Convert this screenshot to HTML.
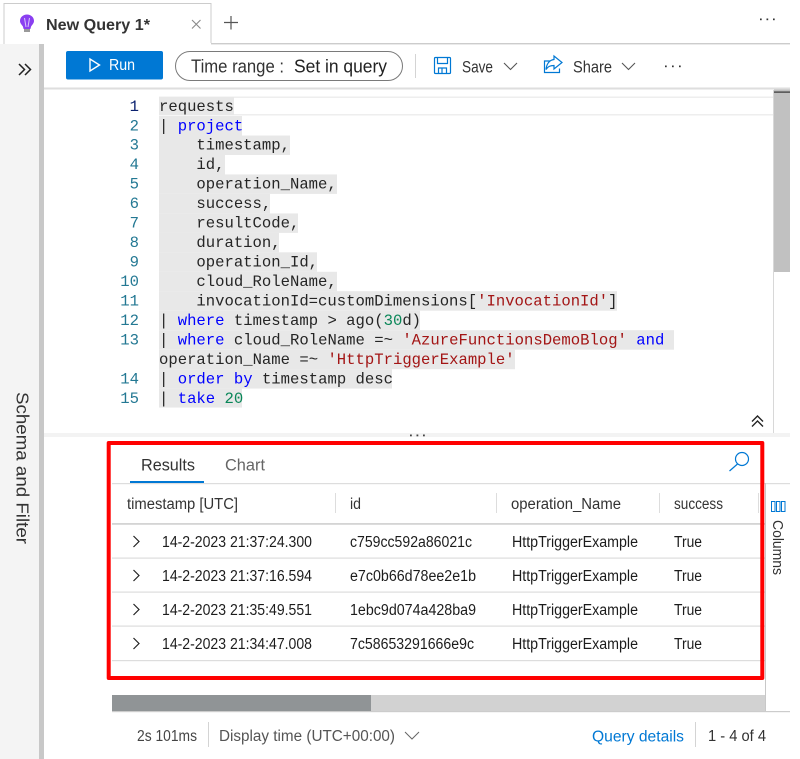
<!DOCTYPE html>
<html><head><meta charset="utf-8"><title>New Query 1</title>
<style>
html,body{margin:0;padding:0;background:#fff;width:800px;height:759px;overflow:hidden}
svg{display:block}
text{font-family:"Liberation Sans",sans-serif;white-space:pre}
.c text,text.c{font-family:"Liberation Mono",monospace;font-size:15.6px;fill:#252525}
.n text{font-family:"Liberation Mono",monospace;font-size:15.6px;fill:#237893;text-anchor:end}
.k{fill:#0000ff}.s{fill:#a31515}.g{fill:#098658}
.u text{font-size:15.5px;fill:#333}
.r text{font-size:15.5px;fill:#1c1c1c}
</style></head><body>
<svg width="800" height="759" viewBox="0 0 800 759" xmlns="http://www.w3.org/2000/svg">
<!-- tab strip -->
<path d="M4 44V3.500H211V43" fill="#fff" stroke="#ccc"/>
<rect x="211" y="43" width="579" height="1.400" fill="#ccc"/>
<path d="M27 14.500c-3.900 0-7 2.800-7 6.400 0 2.500 1.900 3.900 2.900 5.600l.7 2.500h6.800l.7-2.500c1-1.700 2.900-3.100 2.900-5.600 0-3.600-3.100-6.400-7-6.400z" fill="#8a3ff0"/>
<path d="M24.500 18l1.500 9M29.500 18l-1.500 9" stroke="#d9c4fb" stroke-width="1" fill="none"/>
<rect x="24" y="29" width="6" height="3" fill="#9a9a9a"/>
<text x="46" y="30" font-size="15.500" font-weight="bold" fill="#333" textLength="104" lengthAdjust="spacingAndGlyphs">New Query 1*</text>
<path d="M192 20l8.500 8.500M200.500 20l-8.500 8.500" stroke="#8a8a8a" stroke-width="1.100"/>
<path d="M231 16v13.500M224 22.500h14" stroke="#555" stroke-width="1.200"/>
<g fill="#333"><rect x="760" y="18.500" width="1.700" height="1.700"/><rect x="766.500" y="18.500" width="1.700" height="1.700"/><rect x="773" y="18.500" width="1.700" height="1.700"/></g>
<!-- sidebar -->
<rect x="0" y="44" width="39" height="715" fill="#f4f4f4"/>
<rect x="39" y="44" width="5" height="715" fill="#c8c8c8"/>
<path d="M19 64l5.500 5.500L19 75M25 64l5.500 5.500L25 75" stroke="#222" stroke-width="1.500" fill="none"/>
<text transform="translate(16.500 392) rotate(90)" font-size="17.500" fill="#333" textLength="152" lengthAdjust="spacingAndGlyphs">Schema and Filter</text>
<!-- toolbar -->
<rect x="66" y="51" width="97" height="28.500" rx="2" fill="#0078d4"/>
<path d="M90 59v12l9.500-6z" fill="none" stroke="#fff" stroke-width="1.400"/>
<text x="109" y="70" font-size="16" fill="#fff" textLength="26" lengthAdjust="spacingAndGlyphs">Run</text>
<rect x="175.500" y="51.500" width="227" height="29" rx="14.500" fill="#fff" stroke="#7a7a7a"/>
<text x="191" y="72.700" font-size="18" fill="#333" textLength="93" lengthAdjust="spacingAndGlyphs">Time range :</text>
<text x="294" y="72.700" font-size="18" fill="#222" textLength="93" lengthAdjust="spacingAndGlyphs">Set in query</text>
<rect x="415" y="54" width="1" height="24" fill="#d4d4d4"/>
<path d="M434.500 58.500a1 1 0 0 1 1-1h14a1 1 0 0 1 1 1v14a1 1 0 0 1-1 1h-14a1 1 0 0 1-1-1zM437.500 57.500v6h10v-6M438.500 73.500v-5.500h8v5.500M442 68v5" fill="none" stroke="#0078d4" stroke-width="1.200"/>
<text x="462" y="72.500" font-size="17" fill="#333" textLength="31" lengthAdjust="spacingAndGlyphs">Save</text>
<path d="M504 63l6.500 6.500L517 63" fill="none" stroke="#555" stroke-width="1.100"/>
<path d="M554 59.500v-3.500l8 6.500-8 6.500v-3.500c-4 0-6 1-8 4 .5-5 3-9.500 8-10z" fill="none" stroke="#0078d4" stroke-width="1.200"/>
<path d="M550 61h-5.500v11.500h15v-4" fill="none" stroke="#0078d4" stroke-width="1.200"/>
<text x="573" y="72.500" font-size="17" fill="#333" textLength="39" lengthAdjust="spacingAndGlyphs">Share</text>
<path d="M622 63l6.500 6.500L635 63" fill="none" stroke="#555" stroke-width="1.100"/>
<g fill="#333"><rect x="665" y="65.500" width="1.700" height="1.700"/><rect x="672" y="65.500" width="1.700" height="1.700"/><rect x="679" y="65.500" width="1.700" height="1.700"/></g>
<rect x="44" y="87.500" width="746" height="2" fill="#dedede"/>
<!-- editor -->
<rect x="159" y="96.500" width="614" height="1.500" fill="#eee"/>
<rect x="159" y="114" width="614" height="1.500" fill="#eee"/>
<g fill="#e8e8e8">
<rect x="159" y="97" width="75" height="18"/>
<rect x="159" y="116" width="83" height="19.500"/>
<rect x="159" y="135.500" width="131" height="19.500"/>
<rect x="159" y="155" width="66" height="19.500"/>
<rect x="159" y="174.400" width="178" height="19.500"/>
<rect x="159" y="193.900" width="111" height="19.500"/>
<rect x="159" y="213.400" width="139" height="19.500"/>
<rect x="159" y="232.800" width="120" height="19.500"/>
<rect x="159" y="252.300" width="158" height="19.500"/>
<rect x="159" y="271.800" width="178" height="19.500"/>
<rect x="159" y="291.200" width="458" height="19.500"/>
<rect x="159" y="310.700" width="261" height="19.500"/>
<rect x="159" y="330.200" width="515" height="19.500"/>
<rect x="159" y="349.700" width="356" height="19.500"/>
<rect x="159" y="369.100" width="233" height="19.500"/>
<rect x="159" y="388.600" width="83" height="19"/>
</g>
<g class="n">
<text x="139" y="110.800" style="fill:#0b216f">1</text>
<text x="139" y="130.300">2</text><text x="139" y="149.700">3</text><text x="139" y="169.200">4</text>
<text x="139" y="188.700">5</text><text x="139" y="208.100">6</text><text x="139" y="227.600">7</text>
<text x="139" y="247.100">8</text><text x="139" y="266.600">9</text><text x="139" y="286">10</text>
<text x="139" y="305.500">11</text><text x="139" y="325">12</text><text x="139" y="344.400">13</text>
<text x="139" y="383.400">14</text><text x="139" y="402.800">15</text>
</g>
<g class="c">
<text x="159" y="110.800">requests</text>
<text x="159" y="130.300">| <tspan class="k">project</tspan></text>
<text x="196.400" y="149.700">timestamp,</text>
<text x="196.400" y="169.200">id,</text>
<text x="196.400" y="188.700">operation_Name,</text>
<text x="196.400" y="208.100">success,</text>
<text x="196.400" y="227.600">resultCode,</text>
<text x="196.400" y="247.100">duration,</text>
<text x="196.400" y="266.600">operation_Id,</text>
<text x="196.400" y="286">cloud_RoleName,</text>
<text x="196.400" y="305.500">invocationId=customDimensions[<tspan class="s">'InvocationId'</tspan>]</text>
<text x="159" y="325">| <tspan class="k">where</tspan> timestamp &gt; ago(<tspan class="g">30</tspan>d)</text>
<text x="159" y="344.400">| <tspan class="k">where</tspan> cloud_RoleName =~ <tspan class="s">'AzureFunctionsDemoBlog'</tspan> <tspan class="k">and</tspan></text>
<text x="159" y="363.900">operation_Name =~ <tspan class="s">'HttpTriggerExample'</tspan></text>
<text x="159" y="383.400">| <tspan class="k">order by</tspan> timestamp desc</text>
<text x="159" y="402.800">| <tspan class="k">take</tspan> <tspan class="g">20</tspan></text>
</g>
<rect x="773" y="90" width="1" height="343" fill="#d8d8d8"/>
<rect x="774" y="89.500" width="16" height="182.500" fill="#c1c1c1"/>
<rect x="774" y="91.500" width="16" height="1.200" fill="#333"/>
<path d="M752 421.500l5.500-5.500 5.500 5.500M752 426.500l5.500-5.500 5.500 5.500" fill="none" stroke="#222" stroke-width="1.400"/>
<!-- splitter -->
<rect x="44" y="433" width="746" height="4" fill="#f3f3f3"/>
<g fill="#444"><rect x="410" y="434.500" width="1.800" height="1.800"/><rect x="416.500" y="434.500" width="1.800" height="1.800"/><rect x="423" y="434.500" width="1.800" height="1.800"/></g>
<!-- results -->
<text x="141" y="470.500" font-size="17" fill="#333" textLength="54" lengthAdjust="spacingAndGlyphs">Results</text>
<text x="225" y="470.500" font-size="17" fill="#666" textLength="40" lengthAdjust="spacingAndGlyphs">Chart</text>
<rect x="130" y="481" width="74" height="2" fill="#0078d4"/>
<rect x="112" y="483" width="678" height="1.200" fill="#ddd"/>
<circle cx="742" cy="459" r="6.500" fill="none" stroke="#0078d4" stroke-width="1.200"/>
<path d="M737.500 464l-8 7" stroke="#0078d4" stroke-width="1.200"/>
<g class="u">
<text x="127" y="509" textLength="111" lengthAdjust="spacingAndGlyphs">timestamp [UTC]</text>
<text x="350" y="509" textLength="11" lengthAdjust="spacingAndGlyphs">id</text>
<text x="511" y="509" textLength="110" lengthAdjust="spacingAndGlyphs">operation_Name</text>
<text x="674" y="509" textLength="49" lengthAdjust="spacingAndGlyphs">success</text>
</g>
<g fill="#ddd"><rect x="335" y="493" width="1" height="20"/><rect x="496" y="493" width="1" height="20"/><rect x="659" y="493" width="1" height="20"/><rect x="758" y="493" width="1" height="20"/></g>
<rect x="112" y="523" width="653" height="1.800" fill="#d4d4d4"/>
<g fill="#ddd"><rect x="112" y="557.500" width="653" height="1.200"/><rect x="112" y="591.500" width="653" height="1.200"/><rect x="112" y="625.500" width="653" height="1.200"/><rect x="112" y="660" width="653" height="1.200"/></g>
<g fill="none" stroke="#222" stroke-width="1.200">
<path d="M133.500 536l5.500 5.500-5.500 5.500"/><path d="M133.500 570l5.500 5.500-5.500 5.500"/><path d="M133.500 604l5.500 5.500-5.500 5.500"/><path d="M133.500 638l5.500 5.500-5.500 5.500"/>
</g>
<g class="r">
<text x="162" y="547" textLength="150" lengthAdjust="spacingAndGlyphs">14-2-2023 21:37:24.300</text>
<text x="350" y="547" textLength="122" lengthAdjust="spacingAndGlyphs">c759cc592a86021c</text>
<text x="512" y="547" textLength="126" lengthAdjust="spacingAndGlyphs">HttpTriggerExample</text>
<text x="674" y="547" textLength="28" lengthAdjust="spacingAndGlyphs">True</text>
<text x="162" y="581" textLength="150" lengthAdjust="spacingAndGlyphs">14-2-2023 21:37:16.594</text>
<text x="350" y="581" textLength="126" lengthAdjust="spacingAndGlyphs">e7c0b66d78ee2e1b</text>
<text x="512" y="581" textLength="126" lengthAdjust="spacingAndGlyphs">HttpTriggerExample</text>
<text x="674" y="581" textLength="28" lengthAdjust="spacingAndGlyphs">True</text>
<text x="162" y="615" textLength="150" lengthAdjust="spacingAndGlyphs">14-2-2023 21:35:49.551</text>
<text x="350" y="615" textLength="126" lengthAdjust="spacingAndGlyphs">1ebc9d074a428ba9</text>
<text x="512" y="615" textLength="126" lengthAdjust="spacingAndGlyphs">HttpTriggerExample</text>
<text x="674" y="615" textLength="28" lengthAdjust="spacingAndGlyphs">True</text>
<text x="162" y="649" textLength="150" lengthAdjust="spacingAndGlyphs">14-2-2023 21:34:47.008</text>
<text x="350" y="649" textLength="124" lengthAdjust="spacingAndGlyphs">7c58653291666e9c</text>
<text x="512" y="649" textLength="126" lengthAdjust="spacingAndGlyphs">HttpTriggerExample</text>
<text x="674" y="649" textLength="28" lengthAdjust="spacingAndGlyphs">True</text>
</g>
<!-- right columns rail -->
<rect x="765" y="483" width="1" height="228" fill="#c8c8c8"/>
<path d="M771.500 501.500h3.500v10h-3.500zM776.500 501.500h3.500v10h-3.500zM781.500 501.500h3.500v10h-3.500z" fill="none" stroke="#0078d4"/>
<text transform="translate(773 520) rotate(90)" font-size="14.500" fill="#333" textLength="55" lengthAdjust="spacingAndGlyphs">Columns</text>
<!-- red box -->
<path d="M108.700 443H762.300V678H108.700Z" fill="none" stroke="#ff0000" stroke-width="4" stroke-linejoin="round"/>
<!-- hscroll -->
<rect x="112" y="695" width="653" height="16.500" fill="#d2d2d2"/>
<rect x="112" y="695" width="259" height="16.500" fill="#909496"/>
<rect x="112" y="711" width="678" height="1.200" fill="#ccc"/>
<!-- footer -->
<text x="137" y="741" font-size="15.500" fill="#444" textLength="60" lengthAdjust="spacingAndGlyphs">2s 101ms</text>
<rect x="208" y="722" width="1" height="25" fill="#d4d4d4"/>
<text x="219" y="741" font-size="15.500" fill="#555" textLength="176" lengthAdjust="spacingAndGlyphs">Display time (UTC+00:00)</text>
<path d="M405 732l7 7 7-7" fill="none" stroke="#666" stroke-width="1"/>
<text x="592" y="741.500" font-size="15.500" fill="#0078d4" textLength="92" lengthAdjust="spacingAndGlyphs">Query details</text>
<rect x="695" y="722" width="1" height="25" fill="#d4d4d4"/>
<text x="708" y="741" font-size="15.500" fill="#333" textLength="58" lengthAdjust="spacingAndGlyphs">1 - 4 of 4</text>
</svg>
</body></html>
